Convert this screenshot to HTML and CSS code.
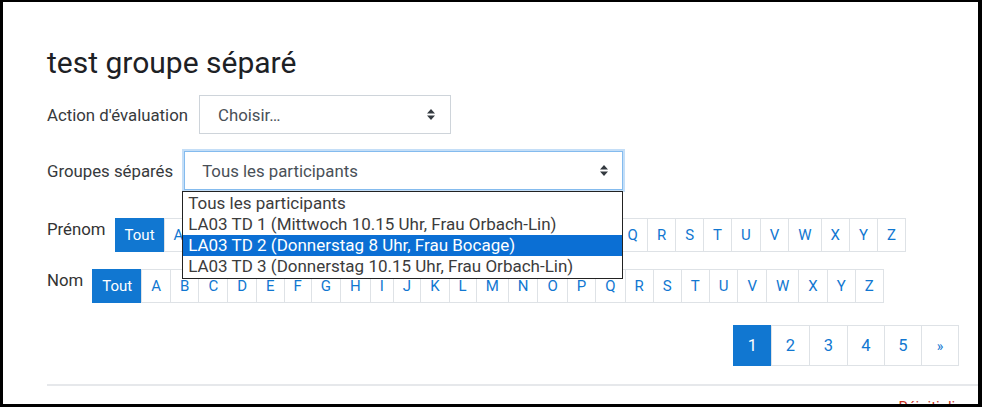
FILE: index.html
```html
<!DOCTYPE html>
<html lang="fr">
<head>
<meta charset="UTF-8" />
<title>test groupe séparé</title>
<link rel="stylesheet" href="styles.css">
</head>
<body>

<div class="frame">
  <div class="page">
    <h2 class="title">test groupe séparé</h2>

    <div class="form-row">
      <label class="form-label">Action d'évaluation</label>
      <div class="select sel-action">
        <span>Choisir…</span>
        <svg class="arrows" width="8" height="11" viewBox="0 0 8 11"><path d="M0 4.5L4 0L8 4.5Z M0 6.5L8 6.5L4 11Z" fill="#343a40"/></svg>
      </div>
    </div>

    <div class="form-row">
      <label class="form-label">Groupes séparés</label>
      <div class="select sel-group focused">
        <span>Tous les participants</span>
        <svg class="arrows" width="8" height="11" viewBox="0 0 8 11"><path d="M0 4.5L4 0L8 4.5Z M0 6.5L8 6.5L4 11Z" fill="#343a40"/></svg>
        <!-- liste ouverte -->
        <ul class="dropdown">
          <li>Tous les participants</li>
          <li>LA03 TD 1 (Mittwoch 10.15 Uhr, Frau Orbach-Lin)</li>
          <li class="active">LA03 TD 2 (Donnerstag 8 Uhr, Frau Bocage)</li>
          <li>LA03 TD 3 (Donnerstag 10.15 Uhr, Frau Orbach-Lin)</li>
        </ul>
      </div>
    </div>

    <div class="initials first">
      <span class="ini-label">Prénom</span>
      <ul class="letters" id="firstLetters"></ul>
    </div>
    <div class="initials">
      <span class="ini-label">Nom</span>
      <ul class="letters" id="lastLetters"></ul>
    </div>

    <div class="pager-row">
      <ul class="pager">
        <li class="active">1</li>
        <li>2</li>
        <li>3</li>
        <li class="narrow">4</li>
        <li class="narrow">5</li>
        <li class="narrow next">»</li>
      </ul>
    </div>

    <hr class="sep">
    <div class="foot"><span class="foot-link">Réinitialiser</span></div>
  </div>
</div>

<script>
  const abc = "ABCDEFGHIJKLMNOPQRSTUVWXYZ".split("");

  function fillLetters(id) {
    const ul = document.getElementById(id);
    let html = '<li class="active">Tout</li>';
    abc.forEach(l => { html += '<li>' + l + '</li>'; });
    ul.innerHTML = html;
  }

  fillLetters('firstLetters');
  fillLetters('lastLetters');
</script>

</body>
</html>
```

FILE: styles.css
```css
html, body {
  margin: 0; padding: 0;
  width: 982px; height: 407px;
  overflow: hidden;
  background: #fff;
  font-family: Roboto, "Liberation Sans", sans-serif;
  color: #373a3c;
}

.frame {
  box-sizing: border-box;
  width: 982px;
  height: 407px;
  border-style: solid;
  border-color: #000;
  border-width: 2px 4px 3px 3px;
  overflow: hidden;
}

.page {
  padding: 43px 0 0 44px;
}

.title {
  margin: 0 0 14px;
  font-size: 30px;
  font-weight: 400;
  line-height: 36px;
  color: #1d2125;
}

.form-row {
  display: flex;
  align-items: center;
  margin-bottom: 17px;
}

.form-label {
  font-size: 16.8px;
  line-height: 24px;
  margin-right: 11px;
}

.select {
  position: relative;
  box-sizing: border-box;
  height: 39px;
  display: flex;
  align-items: center;
  justify-content: space-between;
  border: 1px solid #ced4da;
  font-size: 16.8px;
  color: #495057;
}

.sel-action { width: 252px; padding: 0 15px 0 18px; }
.sel-group { width: 439px; padding: 0 14px 0 17px; }

.select.focused {
  border-color: #84bbee;
  box-shadow: 0 0 0 2px #c4def7;
}

.dropdown {
  position: absolute;
  top: 39px;
  left: -3px;
  width: 441px;
  box-sizing: border-box;
  margin: 0;
  padding: 1px 0;
  list-style: none;
  background: #fff;
  border: 1px solid #222;
  z-index: 10;
}

.dropdown li {
  height: 21px;
  line-height: 20px;
  padding-left: 5px;
  font-size: 17px;
  color: #3c3c3c;
  white-space: nowrap;
}

.dropdown li.active {
  background-color: #0b6fd4;
  color: #fff;
}

.initials {
  display: flex;
  align-items: flex-start;
  margin-bottom: 17px;
}

.initials.first { margin-top: 28px; }

.ini-label {
  font-size: 16.8px;
  line-height: 24px;
  margin-top: -1px;
  margin-right: 9px;
  color: #333;
}

.letters, .pager {
  display: flex;
  margin: 0;
  padding: 0;
  list-style: none;
}

.letters li {
  box-sizing: border-box;
  height: 34px;
  padding: 0 9px;
  display: flex;
  align-items: center;
  justify-content: center;
  border: 1px solid #dee2e6;
  margin-left: -1px;
  font-size: 15px;
  color: #1177d1;
  background: #fff;
}

.letters li:first-child { margin-left: 0; }

.letters li.active, .pager li.active {
  background-color: #1177d1;
  border-color: #1177d1;
  color: #fff;
}

.pager-row {
  display: flex;
  justify-content: flex-end;
  margin-top: 22px;
  padding-right: 19px;
}

.pager li {
  box-sizing: border-box;
  width: 39px;
  height: 41px;
  display: flex;
  align-items: center;
  justify-content: center;
  border: 1px solid #dee2e6;
  margin-left: -1px;
  font-size: 16.5px;
  color: #1177d1;
}

.pager li:first-child { margin-left: 0; }
.pager li.narrow { width: 38px; }
.pager li.next { font-size: 14px; }

.sep {
  margin: 18px 0 0;
  border: none;
  border-top: 2px solid #e6e8eb;
}

.foot {
  display: flex;
  justify-content: flex-end;
  padding: 12px 2px 0 0;
}

.foot-link {
  font-size: 15px;
  color: #ca3120;
}
```
